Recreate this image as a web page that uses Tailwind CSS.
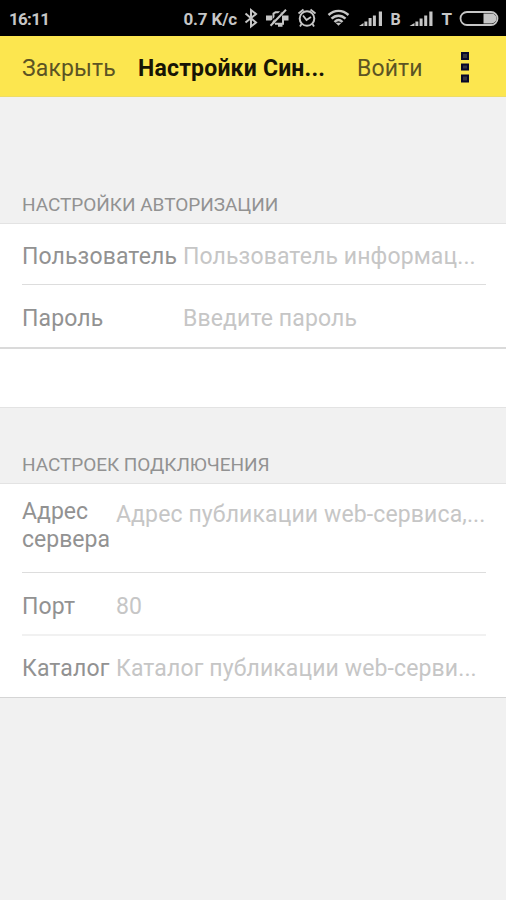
<!DOCTYPE html>
<html lang="ru">
<head>
<meta charset="utf-8">
<title>Настройки Синхронизации</title>
<script src="https://cdn.jsdelivr.net/npm/@tailwindcss/browser@4"></script>
</head>
<body class="w-[506px] h-[900px] overflow-hidden flex flex-col bg-[#f1f1f1] font-['Roboto',sans-serif] font-normal text-[23px] leading-[28px] tracking-[0.12px] text-[#929292] whitespace-nowrap">
<div class="h-9 shrink-0 bg-black text-[#c6c6c6] flex items-center pl-[9px] pr-[7px] pt-[2px] text-[17px] leading-5 font-bold tracking-normal">
  <span class="tracking-[-0.7px]">16:11</span>
  <span class="ml-auto mr-[7px] tracking-[-0.15px]">0.7 K/c</span>
  <svg class="w-[255px] h-[24px] shrink-0" viewBox="244 7 255 24" fill="none" stroke="#c6c6c6" stroke-width="2">
    <path d="M245.500 13.500 256 22.500 251 26.500V10L256 14 245.500 22.500"/>
    <path d="M273.500 23.500V13.500l2-1.200h6M283 15.500v8.200H275M278 25.800h4.500" stroke-width="2"/>
    <path d="M266 15.500h6v5h-6zM284 15.500h4.500v5H284z" fill="#c6c6c6" stroke="none"/>
    <path d="M269.500 23.500 283.500 8.800" stroke="#000" stroke-width="1.500"/>
    <path d="M270.500 25.800 286 9.800" stroke-width="2"/>
    <circle cx="307" cy="18.500" r="7.300"/>
    <path d="M303 15.500 306.500 20l4.500-3M298.500 13.500l5-4M310.500 9.500l5 4M301.500 24l-1.500 2.500M312.500 24l1.500 2.500" stroke-width="1.800"/>
    <path d="M328.500 15c6-5.500 14-5.500 20 0M331.500 18.700c4-4 10-4 14 0M334.500 22c2.500-2.500 5.500-2.500 8 0" stroke-width="2.400"/>
    <path d="m335.500 22.800 3 3 3-3z" fill="#c6c6c6" stroke="none"/>
    <g fill="#c6c6c6" stroke="none">
      <path d="M359 26l4.500-3v3zM364.400 21.500h2.900V26h-2.900zM368.600 18h3v8h-3zM372.900 15.500h3V26h-3zM378.800 11.500h3.200V26h-3.200z"/>
      <path d="M409.500 26l5-3v3zM415.400 21.500h2.900V26h-2.900zM419.600 18.500h3V26h-3zM424.200 15.500h3V26h-3zM429.300 11.500h3.200V26h-3.200z"/>
    </g>
    <rect x="460.500" y="12" width="37" height="13" rx="6.500" stroke-width="1.800"/>
    <path d="M483.500 13.500h8a5 5 0 0 1 0 10h-8z" fill="#c6c6c6" stroke="none"/>
    <text x="390.500" y="25" fill="#c6c6c6" stroke="none" font-size="16" font-weight="700">B</text>
    <text x="441.500" y="25" fill="#c6c6c6" stroke="none" font-size="17" font-weight="700">T</text>
  </svg>
</div>
<header class="h-[61px] shrink-0 bg-[#fce64f] border-b border-[#eedc66] flex items-center pl-[22px] pr-[37px] pt-[5px] text-[#5c5424]">
  <span class="w-[116px]">Закрыть</span>
  <span class="w-[219px] font-bold tracking-[0.2px] text-[#171405]">Настройки Син...</span>
  <span>Войти</span>
  <svg class="ml-auto w-[8px] h-[32px] -mt-[4px]" viewBox="0 0 8 32" fill="#35343e" stroke="#07072b" stroke-width="2"><path d="M1 2h6v6H1zM1 13.500h6v5H1zM1 24.500h6v6H1z"/></svg>
</header>
<main>
  <h2 class="h-[127px] flex items-end pl-[22px] pb-[4px] border-b border-[#e3e3e3] text-[19px] tracking-[-0.03px]">НАСТРОЙКИ АВТОРИЗАЦИИ</h2>
  <section class="bg-white pl-[22px] pr-[20px] border-b-2 border-[#dadada]">
    <div class="h-[61px] flex items-center pt-[5px] border-b border-[#dddddd]"><span class="w-[161px]">Пользователь</span><span class="text-[#c6c6c6]">Пользователь информац...</span></div>
    <div class="h-[62px] flex items-center pt-[5px]"><span class="w-[161px]">Пароль</span><span class="text-[#c6c6c6]">Введите пароль</span></div>
  </section>
  <div class="h-[59px] bg-white border-b border-[#e3e3e3]"></div>
  <h2 class="h-[76px] flex items-end pl-[22px] pb-[4px] border-b border-[#e3e3e3] text-[19px] tracking-[-0.05px]">НАСТРОЕК ПОДКЛЮЧЕНИЯ</h2>
  <section class="bg-white pl-[22px] pr-[20px] border-b border-[#d5d5d5]">
    <div class="h-[89px] flex items-start pt-[14px] border-b border-[#dddddd]"><span class="w-[94px] tracking-normal">Адрес<br>сервера</span><span class="pt-[3px] text-[#c6c6c6]">Адрес публикации web-сервиса,...</span></div>
    <div class="h-[63px] flex items-center pt-[6px] border-b-2 border-[#f1f1f1]"><span class="w-[94px]">Порт</span><span class="text-[#c6c6c6]">80</span></div>
    <div class="h-[61px] flex items-center pt-[5px]"><span class="w-[94px]">Каталог</span><span class="text-[#c6c6c6]">Каталог публикации web-серви...</span></div>
  </section>
</main>
</body>
</html>
